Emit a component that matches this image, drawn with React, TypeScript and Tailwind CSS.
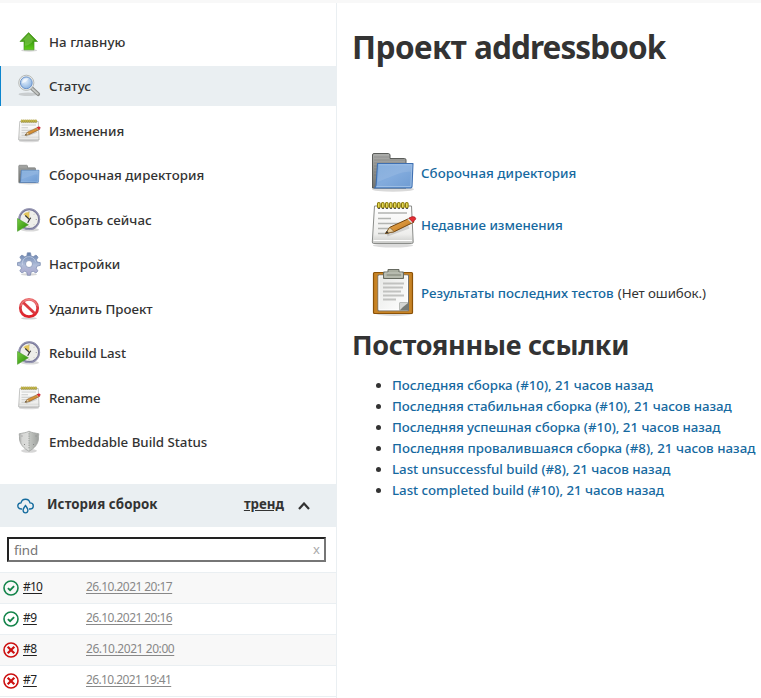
import React from "react";

type IconProps = { className?: string };

function UpArrowIcon({ className = "size-6" }: IconProps) {
  return (
    <svg className={className} viewBox="0 0 24 24">
      <defs>
        <linearGradient id="upFill" x1="0" y1="0" x2="0" y2="1">
          <stop offset="0" stopColor="#4f9d1c" />
          <stop offset=".55" stopColor="#3f9f10" />
          <stop offset="1" stopColor="#5fd018" />
        </linearGradient>
      </defs>
      <ellipse cx="12.2" cy="20.4" rx="8" ry="1.3" fill="#000" opacity=".16" />
      <path d="M11.600 2.600 20.500 11.500H17v8.300H7v-8.300H3z" fill="url(#upFill)" stroke="#4c9a22" strokeWidth=".7" strokeLinejoin="round" />
      <path d="M11.600 4 5.500 10.500h2.400v5.200c2.500-.2 5-1.200 7.500-3.700v-1.500h2z" fill="#9bdc68" opacity=".4" />
    </svg>
  );
}

function SearchIcon({ className = "size-6" }: IconProps) {
  return (
    <svg className={className} viewBox="0 0 24 24">
      <defs>
        <radialGradient id="lens" cx=".4" cy=".35" r=".7">
          <stop offset="0" stopColor="#e5f0fc" />
          <stop offset="1" stopColor="#86b0e0" />
        </radialGradient>
      </defs>
      <ellipse cx="11" cy="20.300" rx="9.500" ry="1.800" fill="#000" opacity=".14" />
      <path d="m14.500 14 6.700 6.200" stroke="#8b8d8b" strokeWidth="3.800" strokeLinecap="round" />
      <path d="m15.500 15 5.300 4.900" stroke="#c6c8c5" strokeWidth="1.800" strokeLinecap="round" />
      <circle cx="9.300" cy="8.800" r="7.600" fill="#eceeeb" stroke="#a9acaa" strokeWidth=".8" />
      <circle cx="9.300" cy="8.800" r="5.900" fill="url(#lens)" stroke="#628bc6" strokeWidth=".9" />
      <path d="M5.200 9.500C5 5.500 8 3.700 11.500 4.400c-1.300 2.700-3.500 3.600-6.300 5.100z" fill="#fff" opacity=".6" />
    </svg>
  );
}

function NotepadIcon({ className = "size-6" }: IconProps) {
  return (
    <svg className={className} viewBox="0 0 48 48">
      <defs>
        <linearGradient id="paper" x1="0" y1="0" x2="0" y2="1">
          <stop offset="0" stopColor="#fff" />
          <stop offset=".75" stopColor="#eeeeec" />
          <stop offset="1" stopColor="#c9cac8" />
        </linearGradient>
        <linearGradient id="pencil" x1="0" y1="0" x2="1" y2="1">
          <stop offset="0" stopColor="#f7b85c" />
          <stop offset="1" stopColor="#b56b13" />
        </linearGradient>
      </defs>
      <g transform="translate(1 0)">
        <ellipse cx="23" cy="44.500" rx="20" ry="2" fill="#000" opacity=".14" />
        <path d="M4.500 5h37l1.700 36q0 1.500-1.500 1.500H3.800Q2.300 42.500 2.300 41z" fill="url(#paper)" stroke="#8b8d8a" strokeWidth="1" />
        <path d="M3.500 39.500h38.500" stroke="#fff" strokeWidth="1.200" />
        {[8, 12, 16, 20, 24, 28, 32, 36].map((x) => (
          <g key={x}>
            <rect x={x - 0.5} y="1.500" width="2.600" height="5.500" rx="1.300" fill="#eadf59" stroke="#8b7909" strokeWidth="1.100" />
            <path d={`M${x} 7.500h2`} stroke="#555" />
          </g>
        ))}
        <path d="M8 12h29M8 17.500h13M8 22.500h21M8 27.500h17M8 32.500h11" stroke="#b2b4b1" strokeWidth="1.300" />
        <path d="M17 34 39 26" stroke="#555" strokeWidth="3" opacity=".2" />
        <path d="m15.500 32.500 4.300-6.200 20.700-9.500 3.600 4.200-19.900 9.700z" fill="url(#pencil)" stroke="#72450f" strokeWidth="1" />
        <path d="m15.500 32.500 4.300-6.200 4.400 4.400z" fill="#ead0a1" stroke="#7b5926" strokeWidth=".7" />
        <path d="m15.500 32.500 1.500-2.400 1.500 1.500z" fill="#222" />
        <path d="m38.800 17.200 3.100-1.500q3.400-.6 4 2.200l-3.500 3.500z" fill="#e42d34" stroke="#a61b22" strokeWidth=".7" />
        <path d="m38 17.800 4 3.900" stroke="#ddd" strokeWidth="1.300" />
      </g>
    </svg>
  );
}

function FolderIcon({ className = "size-6" }: IconProps) {
  return (
    <svg className={className} viewBox="0 0 48 48">
      <defs>
        <linearGradient id="folderBlue" x1="0" y1="0" x2="1" y2="1">
          <stop offset="0" stopColor="#78a7da" />
          <stop offset=".5" stopColor="#82abdd" />
          <stop offset="1" stopColor="#6e9bd2" />
        </linearGradient>
        <linearGradient id="folderBack" x1="0" y1="0" x2="0" y2="1">
          <stop offset="0" stopColor="#acadab" />
          <stop offset="1" stopColor="#71736f" />
        </linearGradient>
      </defs>
      <ellipse cx="24" cy="40.300" rx="21" ry="2.500" fill="#000" opacity=".15" />
      <path d="M3.500 39V6Q3.500 4.500 5 4.500h14.500l1.500 1V9.500h14.500q1.500 0 1.500 1.500v28z" fill="url(#folderBack)" stroke="#5b5d5a" />
      <path d="M5 8h15M5 11h31M5 14h31M5 17h3M5 20h3M5 23h3M5 26h3" stroke="#555" strokeWidth=".6" opacity=".4" />
      <path d="M8.500 14.500H44l-1 23.200q-.1 1.300-1.300 1.300H5.500q1.500-.5 1.600-3z" fill="url(#folderBlue)" stroke="#3f70b2" strokeWidth="1.100" strokeLinejoin="round" />
      <path d="M9.600 15.700h33.200l-.9 21.800H7.400" fill="none" stroke="#a5c4e7" strokeWidth=".8" />
      <path d="M9.700 16h32.500l-.3 7c-9-1-17 4-33 10z" fill="#fff" opacity=".1" />
    </svg>
  );
}

function ClockIcon({ className = "size-6" }: IconProps) {
  return (
    <svg className={className} viewBox="0 0 24 24">
      <defs>
        <linearGradient id="playFill" x1="0" y1="0" x2="1" y2="1">
          <stop offset="0" stopColor="#77ce43" />
          <stop offset="1" stopColor="#258800" />
        </linearGradient>
      </defs>
      <ellipse cx="13" cy="21.800" rx="9" ry="1.800" fill="#000" opacity=".15" />
      <circle cx="12.200" cy="11.200" r="9.900" fill="#eeeeea" stroke="#77779a" strokeWidth="2" />
      <circle cx="12.200" cy="11.200" r="10.500" fill="none" stroke="#aaaac1" strokeWidth=".7" />
      <path d="M12.300 11V4Q8.500 4 6.300 6.300z" fill="#e4c65d" />
      <path d="m8.300 7.500 4.200 4-1.800 3.200M12.500 11.500l1.300-1.800" fill="none" stroke="#333" strokeWidth="1.100" />
      <path d="M12 3.200v1.300M20 11.500h-1.300M12 19.500v-1.300M17.700 5.800l-.7.700M17.700 17.200l-.7-.7" stroke="#92928f" strokeWidth=".7" />
      <path d="m.500 10.500 10.900 6.300L.500 23.300z" fill="url(#playFill)" stroke="#4a9a2b" strokeWidth=".6" />
    </svg>
  );
}

function GearIcon({ className = "size-6" }: IconProps) {
  return (
    <svg className={className} viewBox="0 0 24 24">
      <defs>
        <linearGradient id="gearFill" x1="0" y1="0" x2="0" y2="1">
          <stop offset="0" stopColor="#637fab" />
          <stop offset=".55" stopColor="#b1bed9" />
          <stop offset="1" stopColor="#aaa5ca" />
        </linearGradient>
      </defs>
      <ellipse cx="12" cy="22.400" rx="8" ry="1.200" fill="#000" opacity=".16" />
      <path
        fillRule="evenodd"
        d="m10.300.8 3.200 0 .6 3.100 2.100.9 2.800-1.800 2.100 2.200-1.700 2.700.9 2.200 3 .5v2.800l-3.200.7-.9 2.200 1.700 2.600-2 2.100-2.700-1.700-2.200.9-.6 3.100h-3l-.7-3.200-2.100-.8L4.900 21l-2.100-2.100 1.700-2.600-.9-2.200-3.100-.7v-2.800l3.100-.6.9-2.200-1.700-2.700 2.100-2.100 2.800 1.800 2.100-.9zM12 8.500a3.500 3.500 0 1 0 0 7 3.500 3.500 0 0 0 0-7z"
        fill="url(#gearFill)"
        stroke="#7788ad"
        strokeWidth=".7"
      />
      <path d="M5.500 13a6.700 6.700 0 0 1 13-3.300" fill="none" stroke="#d9e1f0" strokeWidth=".8" opacity=".7" />
    </svg>
  );
}

function ForbiddenIcon({ className = "size-6" }: IconProps) {
  return (
    <svg className={className} viewBox="0 0 24 24">
      <defs>
        <linearGradient id="banFill" x1="0" y1="0" x2="0" y2="1">
          <stop offset="0" stopColor="#e8686a" />
          <stop offset=".5" stopColor="#d93a40" />
          <stop offset="1" stopColor="#e02028" />
        </linearGradient>
      </defs>
      <ellipse cx="12" cy="21.300" rx="8" ry="1.200" fill="#000" opacity=".18" />
      <circle cx="12" cy="11" r="8.700" fill="#fff" stroke="url(#banFill)" strokeWidth="2.800" />
      <path d="m6.200 5.400 11.600 11.200" stroke="#dc3a40" strokeWidth="2.800" />
      <path d="M3.700 9.200a8.500 8.500 0 0 1 16.600 0" fill="none" stroke="#f7a09d" strokeWidth=".9" opacity=".7" />
    </svg>
  );
}

function ShieldIcon({ className = "size-6" }: IconProps) {
  return (
    <svg className={className} viewBox="0 0 24 24">
      <defs>
        <linearGradient id="shieldFill">
          <stop offset="0" stopColor="#a4a6a4" />
          <stop offset=".15" stopColor="#d6d7d5" />
          <stop offset=".49" stopColor="#dcdddb" />
          <stop offset=".51" stopColor="#c4c7c3" />
          <stop offset="1" stopColor="#9da09d" />
        </linearGradient>
      </defs>
      <ellipse cx="12" cy="20.800" rx="8" ry="2" fill="#000" opacity=".16" />
      <path
        d="M12 1.200 C9.500 2.700 5.500 3 2.200 3.800 C2.700 5.500 2.300 7 2.500 9 C3 14.500 7 18.500 12 21.300 C17 18.500 21 14.500 21.500 9 C21.700 7 21.300 5.500 21.800 3.800 C18.500 3 14.500 2.700 12 1.200 Z"
        fill="url(#shieldFill)"
        stroke="#a1a3a1"
        strokeWidth=".8"
      />
      <path d="M12 3.200v16" stroke="#929592" strokeWidth=".9" strokeDasharray="1.300 1" />
      <path d="M4.500 6h1M18.500 6h1M7 14.500h1M16 14.500h1" stroke="#888" />
    </svg>
  );
}

function ClipboardIcon({ className = "size-12" }: IconProps) {
  return (
    <svg className={className} viewBox="0 0 48 48">
      <defs>
        <linearGradient id="clipPage" x1="0" y1="0" x2="1" y2="1">
          <stop offset="0" stopColor="#e7e8e6" />
          <stop offset="1" stopColor="#fff" />
        </linearGradient>
      </defs>
      <g transform="translate(1 -1)">
        <ellipse cx="24" cy="45.800" rx="18" ry="2.200" fill="#000" opacity=".15" />
        <rect x="3.500" y="4.500" width="39" height="41" rx="1" fill="#c78325" stroke="#8c5207" strokeWidth="1.200" />
        <path d="M8 7h30.500v35.800H8z" fill="url(#clipPage)" stroke="#74736f" />
        <path d="M9 8h28.500v33.800H9z" fill="none" stroke="#fff" />
        <path d="M13 15.500h21M13 19.500h20M13 23.500h18M13 27.500h21M13 31.500h13" stroke="#c1c2c0" strokeWidth="1.800" />
        <path d="M29.500 34.500h9v8h-9z" fill="#777a75" />
        <path d="M30 35h8l-5 4-3 3z" fill="#d4d5d2" />
        <path d="M18 4V1.500h11V4h4.500v6.500H13.500V4z" fill="#aaaea1" stroke="#666a61" />
        <path d="M15 5h17v4H15z" fill="none" stroke="#cbcec5" strokeWidth=".8" />
        <path d="M17 7h14" stroke="#888c80" />
      </g>
    </svg>
  );
}

function BuildCloudIcon() {
  return (
    <svg className="h-4 w-[17px]" viewBox="0 0 17 16" fill="none" stroke="#146b9e" strokeWidth="1.350">
      <path d="M5.200 11H4.300Q.8 10.800.8 7.800.8 5.200 4 4.900q.8-3.700 4.500-3.700t4.500 3.700q3.300.1 3.300 3 0 2.800-3.100 3.100h-1.300" />
      <path d="M8.500 7.500Q6.100 10.600 6.100 12.500q.2 2.400 2.400 2.400t2.400-2.400q0-1.900-2.400-5z" />
    </svg>
  );
}

function StatusIcon({ ok }: { ok: boolean }) {
  return (
    <svg className="size-4 shrink-0" viewBox="0 0 16 16" fill="none" stroke={ok ? "#13844a" : "#cc1010"} strokeWidth="1.600">
      <circle cx="8" cy="8" r="7" />
      {ok ? <path d="m4.900 8.100 2.200 2.100 4-4" strokeWidth="1.900" /> : <path d="m4.700 4.700 6.600 6.600m0-6.600-6.600 6.600" strokeWidth="2.200" />}
    </svg>
  );
}

const tasks = [
  { label: "На главную", Icon: UpArrowIcon, gap: "mb-1", tracking: "tracking-[0.05px]" },
  { label: "Статус", Icon: SearchIcon, gap: "mb-[5px]", active: true, tracking: "tracking-[0px]" },
  { label: "Изменения", Icon: NotepadIcon, gap: "mb-1", tracking: "tracking-[0.02px]" },
  { label: "Сборочная директория", Icon: FolderIcon, gap: "mb-[5px]", tracking: "tracking-[0.06px]" },
  { label: "Собрать сейчас", Icon: ClockIcon, gap: "mb-1", tracking: "tracking-[0.04px]" },
  { label: "Настройки", Icon: GearIcon, gap: "mb-[5px]", tracking: "tracking-[0.03px]" },
  { label: "Удалить Проект", Icon: ForbiddenIcon, gap: "mb-1", tracking: "tracking-[0px]" },
  { label: "Rebuild Last", Icon: ClockIcon, gap: "mb-[5px]", tracking: "tracking-[-0.06px]" },
  { label: "Rename", Icon: NotepadIcon, gap: "mb-1", tracking: "tracking-[-0.1px]" },
  { label: "Embeddable Build Status", Icon: ShieldIcon, gap: "", tracking: "tracking-[-0.02px]" },
];

const builds = [
  { id: "#10", date: "26.10.2021 20:17", ok: true, tracking: "tracking-[-0.56px]" },
  { id: "#9", date: "26.10.2021 20:16", ok: true, tracking: "tracking-[-0.56px]" },
  { id: "#8", date: "26.10.2021 20:00", ok: false, tracking: "tracking-[-0.43px]" },
  { id: "#7", date: "26.10.2021 19:41", ok: false, tracking: "tracking-[-0.62px]" },
];

const permalinks = [
  { text: "Последняя сборка (#10), 21 часов назад", tracking: "tracking-[-0.02px]" },
  { text: "Последняя стабильная сборка (#10), 21 часов назад", tracking: "tracking-[-0.03px]" },
  { text: "Последняя успешная сборка (#10), 21 часов назад", tracking: "tracking-[-0.03px]" },
  { text: "Последняя провалившаяся сборка (#8), 21 часов назад", tracking: "tracking-[0.01px]" },
  { text: "Last unsuccessful build (#8), 21 часов назад", tracking: "tracking-[-0.04px]" },
  { text: "Last completed build (#10), 21 часов назад", tracking: "tracking-[-0.04px]" },
];

function Sidebar() {
  return (
    <aside className="w-[337px] shrink-0 border-r border-[#eaeff2]">
      <nav className="pt-[19px]">
        {tasks.map(({ label, Icon, gap, active, tracking }) => (
          <a key={label} className={`flex h-10 items-center pl-[17px] font-medium ${gap} ${tracking} ${active ? "bg-[#eaeff2] shadow-[inset_1px_0_#0b85ce]" : ""}`}>
            <Icon className="size-6 shrink-0" />
            <span className="ml-2 whitespace-nowrap">{label}</span>
          </a>
        ))}
      </nav>
      <section className="mt-[22px]">
        <header className="flex h-[43px] items-center bg-[#eaeff2] pl-[17px] pr-[26px] font-bold">
          <BuildCloudIcon />
          <h2 className="ml-[13px] -mt-[3px] tracking-[0.07px]">История сборок</h2>
          <a className="-mt-[3px] ml-auto underline">тренд</a>
          <svg className="ml-[14px] h-2 w-3" viewBox="0 0 12 8" fill="none" stroke="#333" strokeWidth="2.200">
            <path d="m1 7 5-5.500L11 7" />
          </svg>
        </header>
        <div className="pt-[10px] pr-[10px] pb-[10px] pl-[7px]">
          <div className="flex h-[25px] items-center justify-between border-2 border-t-[#222] border-r-[#767676] border-b-[#767676] border-l-[#222] pr-1 pl-[5px] text-[13.300px] text-[#757575]">
            <span className="tracking-[-0.1px]">find</span>
            <span className="-mt-0.5 text-[13px] text-[#aaa]">x</span>
          </div>
        </div>
        {builds.map(({ id, date, ok, tracking }, i) => (
          <div key={id} className={`flex h-[31px] items-center border-t border-[#eaeff2] pl-[3px] text-[12px] ${i % 2 ? "" : "bg-[#f8f8f8]"}`}>
            <StatusIcon ok={ok} />
            <span className="-mt-0.5 ml-1 w-[63px]">
              <a className={`text-[#222] underline underline-offset-2 ${id === "#10" ? "tracking-[-0.8px]" : "tracking-[-0.4px]"}`}>{id}</a>
            </span>
            <a className={`-mt-0.5 text-[#888] underline underline-offset-2 ${tracking}`}>{date}</a>
          </div>
        ))}
        <div className="border-t border-[#eaeff2]" />
      </section>
    </aside>
  );
}

export default function App() {
  return (
    <div className="h-[698px] w-[761px] overflow-hidden bg-white font-['Noto_Sans','Open_Sans',sans-serif] text-[13.300px] leading-5 text-[#333]">
      <div className="h-[3px] bg-[#f8f8f8]" />
      <div className="flex h-[695px]">
        <Sidebar />
        <main className="min-w-0 flex-1 pl-[15px]">
          <h1 className="mt-6 text-[31.500px] leading-10 font-bold whitespace-nowrap">
            <span className="tracking-[-0.5px]">Проект </span>
            <span className="tracking-[-0.9px]">addressbook</span>
          </h1>
          <div className="mt-[80px] ml-[17px] font-medium text-[#16699f]">
            <a className="flex h-[52px] items-center">
              <FolderIcon className="size-12 shrink-0" />
              <span className="ml-1 tracking-[0.06px]">Сборочная директория</span>
            </a>
            <a className="flex h-[52px] items-center">
              <NotepadIcon className="size-12 shrink-0" />
              <span className="ml-1">Недавние изменения</span>
            </a>
            <div className="mt-[18px] flex h-12 items-center">
              <ClipboardIcon className="size-12 shrink-0" />
              <a className="ml-1 whitespace-nowrap">Результаты последних тестов</a>
              <span className="ml-1 font-normal tracking-[-0.08px] whitespace-nowrap text-[#333]">(Нет ошибок.)</span>
            </div>
          </div>
          <h2 className="mt-[12px] text-[27px] leading-8 font-bold tracking-[-0.27px] whitespace-nowrap">Постоянные ссылки</h2>
          <ul className="mt-[14px] ml-10 list-disc font-medium leading-[21px]">
            {permalinks.map(({ text, tracking }) => (
              <li key={text}>
                <a className={`whitespace-nowrap text-[#16699f] ${tracking}`}>{text}</a>
              </li>
            ))}
          </ul>
        </main>
      </div>
    </div>
  );
}
